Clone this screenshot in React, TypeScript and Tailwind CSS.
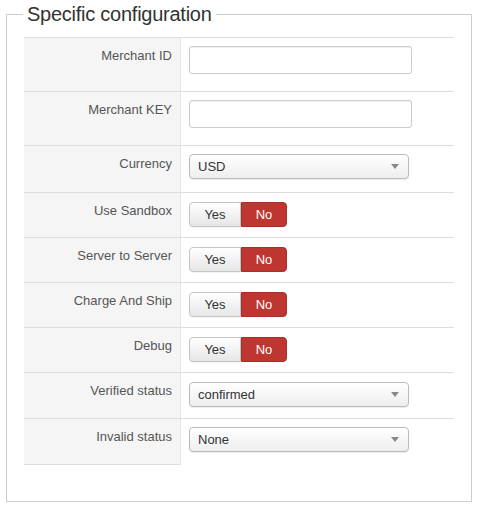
type Row = {
  label: string;
  kind: 'input' | 'select' | 'toggle';
  value?: string;
  pad: string;
  last?: boolean;
};

const rows: Row[] = [
  { label: 'Merchant ID', kind: 'input', pad: 'pt-[8px] pb-[17px]' },
  { label: 'Merchant KEY', kind: 'input', pad: 'pt-[8px] pb-[17px]' },
  { label: 'Currency', kind: 'select', value: 'USD', pad: 'pt-[8px] pb-[13px]' },
  { label: 'Use Sandbox', kind: 'toggle', pad: 'pt-[9px] pb-[10px]' },
  { label: 'Server to Server', kind: 'toggle', pad: 'pt-[9px] pb-[10px]' },
  { label: 'Charge And Ship', kind: 'toggle', pad: 'pt-[9px] pb-[10px]' },
  { label: 'Debug', kind: 'toggle', pad: 'pt-[9px] pb-[10px]' },
  { label: 'Verified status', kind: 'select', value: 'confirmed', pad: 'pt-[9px] pb-[11px]' },
  { label: 'Invalid status', kind: 'select', value: 'None', pad: 'pt-[8px] pb-[13px]', last: true },
];

function TextInput() {
  return (
    <div className="h-[28px] w-[223px] rounded-[3px] border border-[#cccccc] bg-white shadow-[inset_0_1px_1px_rgba(0,0,0,0.06)]" />
  );
}

function Select({ value }: { value?: string }) {
  return (
    <div className="flex h-[25px] w-[220px] items-center justify-between rounded-[4px] border border-[#bbbbbb] bg-gradient-to-b from-white to-[#eeeeee] pl-[8px] pr-[9px] text-[13px] text-[#333] shadow-[0_1px_1px_rgba(0,0,0,0.08)]">
      <span>{value}</span>
      <svg width="8" height="5" viewBox="0 0 8 5">
        <path d="M0 0h8L4 5z" fill="#888" />
      </svg>
    </div>
  );
}

function Toggle() {
  return (
    <div className="flex h-[25px] text-[13px]">
      <div className="flex w-[52px] items-center justify-center rounded-l-[4px] border border-[#c5c5c5] bg-gradient-to-b from-white to-[#e6e6e6] text-[#333] shadow-[0_1px_1px_rgba(0,0,0,0.05)]">
        Yes
      </div>
      <div className="flex w-[46px] items-center justify-center rounded-r-[4px] border border-[#a5302a] bg-[#bd362f] text-white">
        No
      </div>
    </div>
  );
}

export default function App() {
  return (
    <div className="h-[505px] w-[479px] bg-white pl-[6px] pr-[7px] font-['Liberation_Sans',Arial,sans-serif]">
      <fieldset className="h-[502px] border border-[#cccccc] pl-[17px] pr-[17px] pt-[9px]">
        <legend className="ml-[-1px] px-[4px] text-[20px] leading-[28px] tracking-[-0.25px] text-[#333]">
          Specific configuration
        </legend>
        <div className="flex flex-col">
          {rows.map((r) => (
            <div key={r.label} className="flex border-t border-[#dddddd]">
              <div
                className={`w-[157px] shrink-0 border-r border-[#e6e6e6] bg-[#f5f5f5] pr-[8px] pt-[9px] text-right text-[13px] leading-[18px] text-[#555] ${
                  r.last ? 'border-b border-b-[#dddddd]' : ''
                }`}
              >
                {r.label}
              </div>
              <div className={`pl-[8px] ${r.pad}`}>
                {r.kind === 'input' && <TextInput />}
                {r.kind === 'select' && <Select value={r.value} />}
                {r.kind === 'toggle' && <Toggle />}
              </div>
            </div>
          ))}
        </div>
      </fieldset>
    </div>
  );
}
